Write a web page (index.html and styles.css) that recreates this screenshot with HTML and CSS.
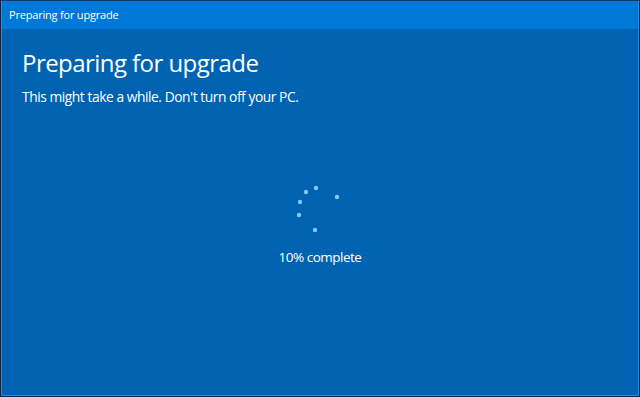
FILE: index.html
```html
<!DOCTYPE html>
<html lang="en">
<head>
    <meta charset="UTF-8">
    <meta name="viewport" content="width=device-width, initial-scale=1.0">
    <title>Preparing for upgrade</title>
    <link rel="stylesheet" href="styles.css">
</head>
<body>
    <div class="window">
        <div class="titlebar">Preparing for upgrade</div>
        <div class="content">
            <h1>Preparing for upgrade</h1>
            <p class="subtitle">This might take a while. Don't turn off your PC.</p>
            <div class="progress">
                <svg class="spinner" width="48" height="48" viewBox="0 0 48 48">
                    <circle cx="23" cy="3" r="2.2"/>
                    <circle cx="13" cy="7" r="2.2"/>
                    <circle cx="7" cy="17" r="2.2"/>
                    <circle cx="6" cy="30" r="2.2"/>
                    <circle cx="22" cy="45" r="2.2"/>
                    <circle cx="44" cy="12" r="2.2"/>
                </svg>
                <p class="percent">10% complete</p>
            </div>
        </div>
    </div>
</body>
</html>
```

FILE: styles.css
```css
html, body {
    margin: 0;
    padding: 0;
    height: 100%;
    background-color: #0b2440;
}
body {
    font-family: "Open Sans", "Noto Sans", Arial, sans-serif;
    color: #fff;
}
.window {
    box-sizing: border-box;
    height: 397px;
    border: 1px solid #0b2440;
    border-top: 1px solid #123a63;
    display: flex;
    flex-direction: column;
}
.titlebar {
    height: 28px;
    line-height: 27px;
    padding-left: 7px;
    background-color: #0078d7;
    font-size: 11px;
    letter-spacing: -0.2px;
    border-left: 1px solid #2b90ea;
    border-right: 1px solid #2b90ea;
}
.content {
    flex: 1;
    background-color: #0063b1;
    border: 1px solid #2b8ae0;
    border-top: none;
    padding: 17px 20px 0;
}
h1 {
    margin: 0;
    font-size: 24px;
    font-weight: 400;
    line-height: 34px;
    letter-spacing: -0.55px;
}
.subtitle {
    margin: 7px 0 0;
    font-size: 13.8px;
    line-height: 20px;
    letter-spacing: -0.45px;
}
.progress {
    display: flex;
    flex-direction: column;
    align-items: center;
    margin-top: 78px;
}
.spinner {
    fill: #86c5f6;
    margin-left: -6px;
}
.percent {
    margin: 15px 0 0;
    font-size: 13.5px;
    letter-spacing: -0.5px;
}
```
